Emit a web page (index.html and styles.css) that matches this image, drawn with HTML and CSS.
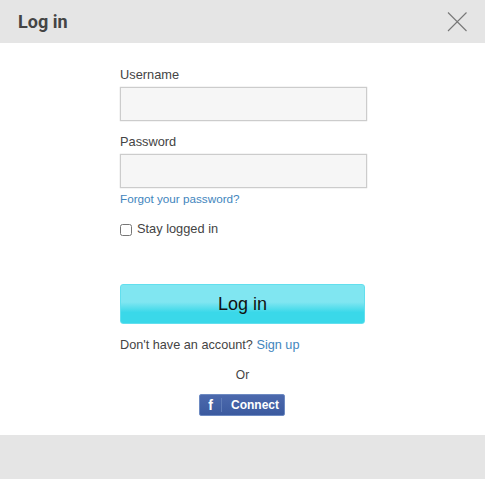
FILE: index.html
```html
<!DOCTYPE html>
<html lang="en">
<head>
  <meta charset="UTF-8">
  <title>Log in</title>
  <link rel="stylesheet" href="styles.css">
</head>
<body>
  <div class="modal">
    <!-- Header -->
    <div class="modal-header">
      <h3>Log in</h3>
      <svg class="close" width="20" height="20" viewBox="0 0 20 20">
        <path d="M1 0.5 L19.5 19 M19.5 0.5 L1 19" stroke="#777" stroke-width="1.1" fill="none"/>
      </svg>
    </div>

    <!-- Form -->
    <form class="modal-body">
      <label class="field-label">Username</label>
      <input class="field" type="text">
      <label class="field-label second">Password</label>
      <input class="field" type="password">
      <a class="forgot" href="#">Forgot your password?</a>
      <label class="stay"><input type="checkbox"> Stay logged in</label>
      <button class="submit" type="button">Log in</button>
      <div class="signup">Don't have an account? <a href="#">Sign up</a></div>
      <div class="or">Or</div>
      <div class="fb-row">
        <a class="fb-connect" href="#"><span class="fb-f">f</span><span class="fb-text">Connect</span></a>
      </div>
    </form>

    <div class="modal-footer"></div>
  </div>
</body>
</html>
```

FILE: styles.css
```css
html, body {
  margin: 0;
  padding: 0;
  height: 100%;
  background: #fff;
  overflow: hidden;
  font-family: "Liberation Sans", Arial, sans-serif;
  color: #444;
}

.modal {
  height: 479px;
  display: flex;
  flex-direction: column;
}

.modal-header {
  height: 43px;
  background: #e5e5e5;
  display: flex;
  align-items: center;
  justify-content: space-between;
  padding: 0 18px;
}

.modal-header h3 {
  margin: 0;
  font-size: 18px;
  font-weight: bold;
  font-family: Roboto, "Liberation Sans", sans-serif;
  color: #444;
}

.close {
  margin-top: 1px;
}

.modal-body {
  flex: 1;
  display: flex;
  flex-direction: column;
  padding: 24px 118px 0 120px;
  font-size: 12.8px;
}

.field-label {
  line-height: 16px;
  height: 20px;
}

.field-label.second {
  margin-top: 13px;
}

.field {
  display: block;
  box-sizing: border-box;
  width: 247px;
  height: 34px;
  margin: 0;
  background: #f6f6f6;
  border: 1px solid #ccc;
  box-shadow: 0 0 1px #bbb;
  border-radius: 0;
  padding: 0 6px;
}

.forgot {
  margin-top: 3px;
  font-size: 11.7px;
  line-height: 15px;
  color: #4285bd;
  text-decoration: none;
}

.stay {
  display: flex;
  align-items: center;
  margin-top: 15px;
  line-height: 16px;
}

.stay input {
  margin: 2px 5px 0 0;
  width: 12px;
  height: 12px;
}

.submit {
  box-sizing: border-box;
  width: 245px;
  height: 40px;
  margin-top: 47px;
  border: 1px solid #62dfee;
  border-radius: 3px;
  background: linear-gradient(to bottom, #80e6f1 0%, #80e6f1 45%, #3ad8e9 72%, #3ad8e9 100%);
  font-family: "Liberation Sans", Arial, sans-serif;
  font-size: 18px;
  color: #111;
  padding: 0;
}

.signup {
  margin-top: 13px;
  line-height: 16px;
  font-size: 12.7px;
}

.signup a {
  color: #4285bd;
  text-decoration: none;
}

.or {
  margin-top: 14px;
  width: 245px;
  text-align: center;
  font-size: 12px;
  line-height: 16px;
}

.fb-row {
  margin-top: 11px;
  width: 244px;
  display: flex;
  justify-content: center;
}

.fb-connect {
  box-sizing: border-box;
  width: 86px;
  height: 22px;
  display: flex;
  align-items: center;
  background: linear-gradient(to bottom, #4c69ad, #3b5a9f);
  border: 1px solid #6d8ac2;
  border-radius: 2px;
  color: #fff;
  font-size: 12px;
  font-weight: bold;
  text-decoration: none;
}

.fb-f {
  width: 21px;
  text-align: center;
  border-right: 1px solid #5f7cb8;
  font-size: 14px;
  line-height: 14px;
}

.fb-text {
  margin-left: 9px;
}

.modal-footer {
  height: 44px;
  background: #e5e5e5;
}
```
